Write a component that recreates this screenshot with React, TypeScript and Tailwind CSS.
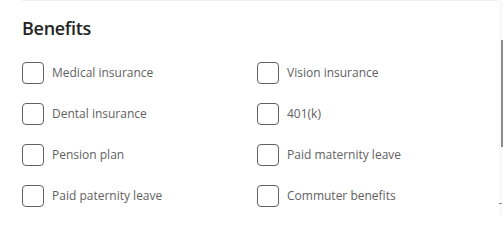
const benefits = [
  "Medical insurance",
  "Vision insurance",
  "Dental insurance",
  "401(k)",
  "Pension plan",
  "Paid maternity leave",
  "Paid paternity leave",
  "Commuter benefits",
];

const BenefitsPage = () => {
  return (
    <div
      className="relative w-[503px] h-[229px] bg-white overflow-hidden"
      style={{ fontFamily: '"Open Sans", "Noto Sans", sans-serif' }}
    >
      <div className="ml-[22px] mr-[5px] border-t border-[#efefef]"></div>

      <div className="pl-[22px] pt-[14px]">
        <h2 className="text-[18px] leading-[26px] font-semibold text-[#242424] tracking-[-0.3px]">
          Benefits
        </h2>

        <div className="grid grid-cols-[235px_1fr] mt-[11px]">
          {benefits.map((label) => (
            <label key={label} className="flex items-center h-[41px] gap-[8px] cursor-pointer">
              <span className="w-[22px] h-[22px] rounded-[4px] border border-[#616161] bg-white shrink-0"></span>
              <span className="text-[12px] text-[#616161]">{label}</span>
            </label>
          ))}
        </div>
      </div>

      <div className="absolute right-0 top-0 w-[4px] h-[215px] bg-[#fafafa]">
        <div className="absolute right-0 top-[40px] w-[2px] h-[107px] bg-[#8a8a8a]"></div>
        <div className="absolute right-[1px] top-[203px] w-[3px] h-[1px] bg-[#888]"></div>
      </div>
    </div>
  );
};

export default BenefitsPage;
